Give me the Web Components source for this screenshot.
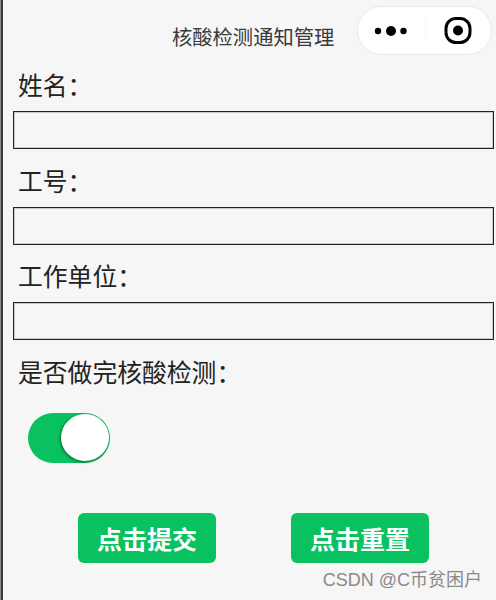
<!DOCTYPE html>
<html lang="zh"><head><meta charset="utf-8">
<style>
html,body{margin:0;padding:0;height:600px;overflow:hidden;background:#f6f6f6}
body{font-family:"Noto Sans CJK SC","Liberation Sans",sans-serif;color:#222}
</style></head><body>
<app-page>
  <nav-bar>核酸检测通知管理</nav-bar>
  <form-field label="姓名：" style="--gap-top:8px"></form-field>
  <form-field label="工号：" style="--gap-top:16px"></form-field>
  <form-field label="工作单位：" style="--gap-top:15px"></form-field>
  <form-switch label="是否做完核酸检测："></form-switch>
  <action-bar>
    <green-button>点击提交</green-button>
    <green-button>点击重置</green-button>
  </action-bar>
  <water-mark>CSDN @C币贫困户</water-mark>
</app-page>
<script>
function def(name,html){
  customElements.define(name,class extends HTMLElement{
    constructor(){super();this.attachShadow({mode:'open'}).innerHTML=typeof html==='function'?html(this):html;}
  });
}
def('app-page',`<style>:host{display:flex;flex-direction:column;position:relative;height:600px;box-sizing:border-box;padding-left:3px;background:linear-gradient(90deg,#8a8a8a 1px,#3c3c3c 1px,#3c3c3c 3px,#f6f6f6 3px)}</style><slot></slot>`);
def('nav-bar',`<style>
:host{display:flex;align-items:center;height:61px;box-sizing:border-box;font-size:20.3px;color:#3a3a3a}
.t{margin-left:169px;width:162px;white-space:nowrap;line-height:24px;margin-top:11px}
.cap{margin-left:23px;width:135px;height:49px;box-sizing:border-box;background:#fff;border:1px solid #e8e8e8;border-radius:25px;display:flex;align-items:center}
svg{display:block}
</style><span class="t"><slot></slot></span>
<div class="cap"><svg width="133" height="47" viewBox="0 0 133 47">
<circle cx="20" cy="24" r="3.2" fill="#000"/><circle cx="33" cy="24" r="5" fill="#000"/><circle cx="45.5" cy="24" r="3.2" fill="#000"/>
<rect x="67" y="10" width="1" height="27" fill="#f8f8f8"/>
<rect x="88" y="11.5" width="24" height="24" rx="10" fill="none" stroke="#000" stroke-width="3"/><circle cx="100" cy="23.5" r="5" fill="#000"/>
</svg></div>`);
def('form-field',el=>`<style>
:host{display:flex;flex-direction:column;margin-top:var(--gap-top,0);padding-left:10px}
.l{font-size:24.8px;line-height:30px;height:30px;padding-left:5px;margin-bottom:12px;color:#222;white-space:nowrap}
.i{display:block;width:481px;height:38px;box-sizing:border-box;border:1px solid #222;box-shadow:inset 0 0 0 1px rgba(0,0,0,.18);background:transparent;padding:0;margin:0;border-radius:0;outline:none}
</style><div class="l">${el.getAttribute('label')}</div><input class="i" type="text">`);
def('form-switch',el=>`<style>
:host{display:flex;flex-direction:column;padding-left:15px;margin-top:16px}
.l{font-size:24.8px;line-height:30px;height:30px;color:#222;white-space:nowrap}
.s{margin:27px 0 0 10px;width:82px;height:50px;border-radius:25px;background:#09c15f;position:relative}
.k{position:absolute;right:1px;top:1px;width:48px;height:47px;border-radius:50%;background:#fff;box-shadow:-1px 1px 3px rgba(0,0,0,.45)}
</style><div class="l">${el.getAttribute('label')}</div><div class="s"><div class="k"></div></div>`);
def('action-bar',`<style>:host{display:flex;gap:75px;padding-left:75px;margin-top:50px}</style><slot></slot>`);
def('green-button',`<style>
:host{display:flex;align-items:center;justify-content:center;width:138px;height:50px;border-radius:6px;background:#09c15f;color:#fff;font-size:25px;font-weight:700;line-height:30px}
</style><slot></slot>`);
def('water-mark',`<style>
:host{position:absolute;right:14px;top:569px;font-family:"Liberation Sans","Noto Sans CJK SC",sans-serif;font-size:18px;line-height:22px;color:#8a8a8a;white-space:nowrap}
</style><slot></slot>`);
</script>
</body></html>
